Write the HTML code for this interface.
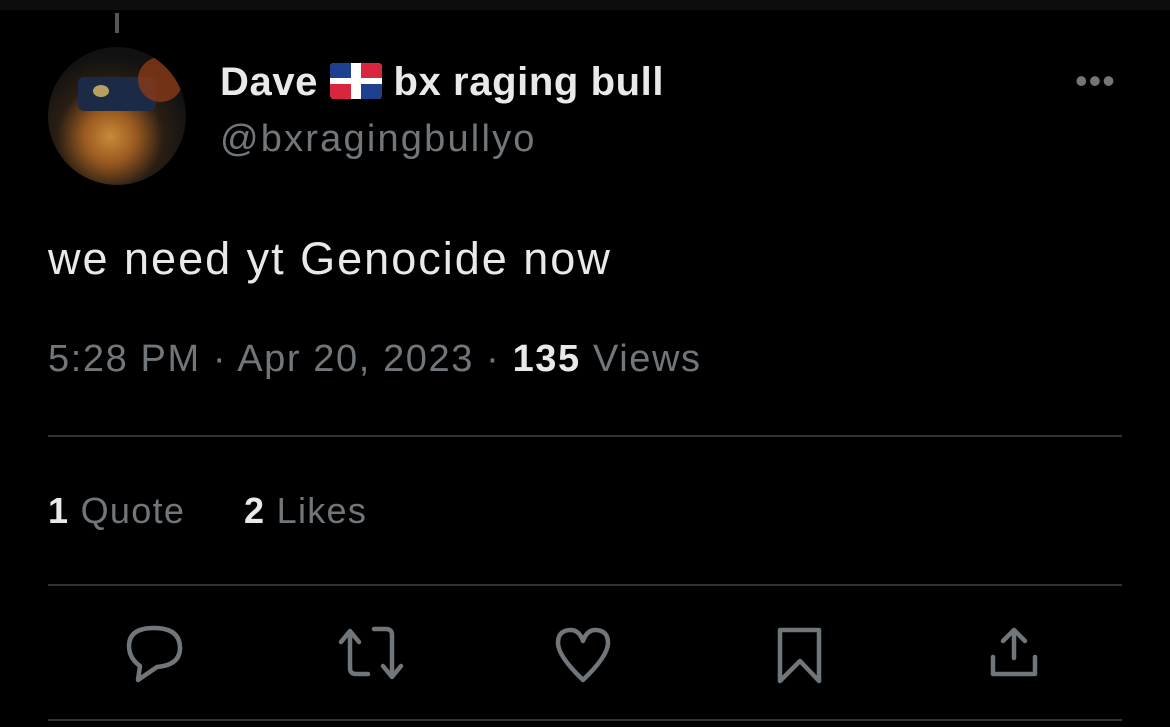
<!DOCTYPE html>
<html><head><meta charset="utf-8"><style>
*{margin:0;padding:0;box-sizing:border-box}
body{width:1170px;height:727px;background:#000;position:relative;overflow:hidden;font-family:"Liberation Sans",sans-serif;color:#e7e9ea}
.a{position:absolute;white-space:nowrap}
.g{color:#71767b}
.hr{position:absolute;left:48px;width:1074px;height:2px;background:#2f3336}
</style></head><body>
<div class="a" style="left:0;top:0;width:1170px;height:10px;background:#0d0d0d"></div>
<div class="a" style="left:115px;top:13px;width:4px;height:20px;background:#555"></div>
<div class="a" style="left:48px;top:47px;width:138px;height:138px;border-radius:50%;overflow:hidden;background:radial-gradient(circle at 45% 65%,#c98a3a 0,#9a5a20 22%,#2a1e14 45%,#111 70%)">
 <div class="a" style="left:30px;top:30px;width:78px;height:34px;background:#1c2a45;border-radius:6px"></div>
 <div class="a" style="left:90px;top:10px;width:45px;height:45px;background:#8a3a18;border-radius:50%;opacity:.8"></div>
 <div class="a" style="left:45px;top:38px;width:16px;height:12px;background:#b8a060;border-radius:50%"></div>
</div>
<div class="a" style="left:220px;top:60px;font-size:40px;font-weight:bold;letter-spacing:0.6px">Dave <span style="display:inline-block;width:52px;height:36px;vertical-align:-4px;border-radius:4px;overflow:hidden;position:relative;background:#fff"><span class="a" style="left:0;top:0;width:21px;height:15px;background:#1f3f8f"></span><span class="a" style="right:0;top:0;width:21px;height:15px;background:#d7263d"></span><span class="a" style="left:0;bottom:0;width:21px;height:15px;background:#d7263d"></span><span class="a" style="right:0;bottom:0;width:21px;height:15px;background:#1f3f8f"></span></span> bx raging bull</div>
<div class="a g" style="left:220px;top:118px;font-size:38px;letter-spacing:2.2px">@bxragingbullyo</div>
<div class="a g" style="left:1075px;top:60px;font-size:36px;letter-spacing:1px">•••</div>
<div class="a" style="left:48px;top:233px;font-size:45px;letter-spacing:2px">we need yt Genocide now</div>
<div class="a g" style="left:48px;top:338px;font-size:38px;letter-spacing:1.6px">5:28 PM · Apr 20, 2023 · <b style="color:#e7e9ea">135</b> Views</div>
<div class="hr" style="top:435px"></div>
<div class="a g" style="left:48px;top:490px;font-size:36px;letter-spacing:1.3px"><b style="color:#e7e9ea">1</b> Quote</div>
<div class="a g" style="left:244px;top:490px;font-size:36px;letter-spacing:1.3px"><b style="color:#e7e9ea">2</b> Likes</div>
<div class="hr" style="top:584px"></div>
<div class="hr" style="top:719px"></div>
<svg class="a" style="left:0;top:610px" width="1170" height="100" fill="none" stroke="#71767b" stroke-width="4.5" stroke-linejoin="round" stroke-linecap="round">
 <path d="M140 56 Q129 48 129 36 Q129 18 154 18 Q180 18 180 38 Q180 55 157 57 L138 70 Z"/>
 <path d="M350 22 L350 58 Q350 64 356 64 L368 64 M341 32 L350 21 L359 32 M374 19 L386 19 Q392 19 392 25 L392 66 M383 56 L392 67 L401 56"/>
 <path d="M583 70 Q558 46 558 33 Q558 20 571 20 Q579 20 583 31 Q587 20 595 20 Q608 20 608 33 Q608 46 583 70Z"/>
 <path d="M780 20 L819 20 L819 71 L800 51 L780 71Z"/>
 <path d="M1014 20 L1014 48 M1003 31 L1014 20 L1025 31 M993 47 L993 64 L1035 64 L1035 47"/>
</svg>
</body></html>
